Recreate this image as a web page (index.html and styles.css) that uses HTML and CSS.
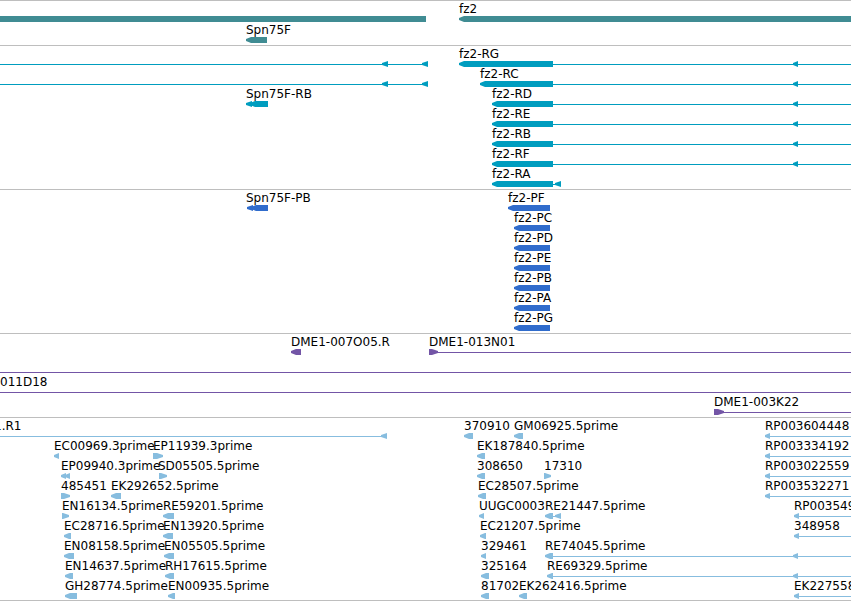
FILE: index.html
```
<!DOCTYPE html>
<html lang="en">
<head>
  <meta charset="utf-8">
  <title>Genome Browser</title>
  <link rel="stylesheet" href="styles.css">
</head>
<body>
  <main class="browser">
    <section class="track gene" id="gene" aria-label="Genes"></section>
    <section class="track transcript" id="transcript" aria-label="Transcripts"></section>
    <section class="track protein" id="protein" aria-label="Proteins"></section>
    <section class="track clone" id="clone" aria-label="Clones"></section>
    <section class="track est" id="est" aria-label="ESTs"></section>
  </main>
  <script src="tracks.js"></script>
</body>
</html>
```

FILE: styles.css
```
body {
  margin: 0;
  background-color: #fff;
  color: #000;
  font-family: "DejaVu Sans", sans-serif;
  font-size: 12px;
  line-height: 16px;
}

.browser {
  border-bottom: 1px solid #bebebe;
  overflow: hidden;
}

.track {
  display: flex;
  flex-direction: column;
  border-top: 1px solid #bebebe;
  padding-bottom: 3px;
}

/* track colors */
.gene {
  color: #408c93;
  gap: 1px;
}

.transcript {
  color: #009dbf;
}

.protein {
  color: #306ccc;
}

.clone {
  color: #7355a6;
}

.est {
  color: #87bddf;
  padding-bottom: 2px;
}

.row {
  position: relative;
  height: 20px;
}

.label {
  position: absolute;
  top: 0;
  color: #000;
  white-space: nowrap;
}

/* feature glyphs */
.bar,
.left,
.right,
.tip {
  position: absolute;
  top: 15px;
  height: 6px;
  background-color: currentColor;
}

.left {
  clip-path: polygon(0 34%, 5px 0, 100% 0, 100% 100%, 5px 100%, 0 66%);
}

.right {
  clip-path: polygon(0 0, calc(100% - 6px) 0, 100% 34%, 100% 66%, calc(100% - 6px) 100%, 0 100%);
}

.tip {
  clip-path: polygon(0 34%, 100% 0, 100% 100%, 0 66%);
}

.line {
  position: absolute;
  top: 18px;
  height: 1px;
  background-color: currentColor;
}

.to-edge {
  right: 0;
}
```

FILE: tracks.js
```
// Each row is a list of [type, start, end or text].
// A feature with no end runs on to the edge of the view.
var tracks = {
  gene: [
    [["bar", 0, 426], ["label", 459, "fz2"], ["left", 459]],
    [["label", 246, "Spn75F"], ["left", 246, 267]]
  ],
  transcript: [
    [["line", 0, 428], ["tip", 382, 388], ["tip", 422, 428],
     ["label", 459, "fz2-RG"], ["left", 459, 553], ["line", 553], ["tip", 793, 798]],
    [["line", 0, 428], ["tip", 382, 388], ["tip", 422, 428],
     ["label", 480, "fz2-RC"], ["left", 480, 553], ["line", 553], ["tip", 793, 798]],
    [["label", 246, "Spn75F-RB"], ["tip", 246, 252], ["left", 250, 268],
     ["label", 492, "fz2-RD"], ["left", 492, 553], ["line", 553], ["tip", 793, 798]],
    [["label", 492, "fz2-RE"], ["left", 492, 553], ["line", 553], ["tip", 793, 798]],
    [["label", 492, "fz2-RB"], ["left", 492, 553], ["line", 553], ["tip", 793, 798]],
    [["label", 492, "fz2-RF"], ["left", 492, 553], ["line", 553], ["tip", 793, 798]],
    [["label", 492, "fz2-RA"], ["left", 492, 553], ["line", 553, 561], ["tip", 555, 561]]
  ],
  protein: [
    [["label", 246, "Spn75F-PB"], ["tip", 247, 253], ["left", 251, 268],
     ["label", 508, "fz2-PF"], ["left", 508, 550]],
    [["label", 514, "fz2-PC"], ["left", 514, 550]],
    [["label", 514, "fz2-PD"], ["left", 514, 550]],
    [["label", 514, "fz2-PE"], ["left", 514, 550]],
    [["label", 514, "fz2-PB"], ["left", 514, 550]],
    [["label", 514, "fz2-PA"], ["left", 514, 550]],
    [["label", 514, "fz2-PG"], ["left", 514, 550]]
  ],
  clone: [
    [["label", 291, "DME1-007O05.R"], ["left", 291, 301],
     ["label", 429, "DME1-013N01"], ["right", 429, 438], ["line", 438]],
    [["line", 0]],
    [["label", 0, "011D18"], ["line", 0]],
    [["label", 714, "DME1-003K22"], ["right", 714, 724], ["line", 724]]
  ],
  est: [
    [["label", -6, "1.R1"], ["line", 0, 387], ["tip", 381, 387],
     ["label", 464, "370910"], ["left", 464, 473],
     ["label", 514, "GM06925.5prime"], ["left", 514, 523],
     ["label", 765, "RP003604448"], ["tip", 765, 770], ["line", 770]],
    [["label", 54, "EC00969.3prime"], ["tip", 54, 59],
     ["label", 153, "EP11939.3prime"], ["right", 153, 163],
     ["label", 477, "EK187840.5prime"], ["left", 477, 485],
     ["label", 765, "RP003334192"], ["tip", 765, 770], ["line", 770]],
    [["label", 61, "EP09940.3prime"], ["tip", 61, 66], ["left", 65, 70],
     ["label", 158, "SD05505.5prime"], ["right", 159, 167],
     ["label", 477, "308650"], ["left", 477, 485],
     ["label", 544, "17310"], ["right", 544, 551],
     ["label", 765, "RP003022559"], ["tip", 765, 770], ["line", 770]],
    [["label", 61, "485451"], ["right", 61, 70],
     ["label", 111, "EK292652.5prime"], ["left", 111, 121],
     ["label", 478, "EC28507.5prime"], ["left", 478, 486],
     ["label", 765, "RP003532271"], ["tip", 765, 770], ["line", 770]],
    [["label", 62, "EN16134.5prime"], ["right", 62, 69],
     ["label", 163, "RE59201.5prime"], ["left", 163, 174],
     ["label", 479, "UUGC0003"], ["left", 479, 484],
     ["label", 545, "RE21447.5prime"], ["left", 545, 553], ["line", 553, 561], ["tip", 555, 561],
     ["label", 794, "RP003549"], ["tip", 794, 799], ["line", 799]],
    [["label", 64, "EC28716.5prime"], ["left", 64, 71],
     ["label", 163, "EN13920.5prime"], ["left", 163, 173],
     ["label", 480, "EC21207.5prime"], ["left", 480, 486],
     ["label", 794, "348958"], ["tip", 794, 799], ["line", 799]],
    [["label", 64, "EN08158.5prime"], ["left", 64, 74],
     ["label", 164, "EN05505.5prime"], ["left", 164, 174],
     ["label", 481, "329461"], ["left", 481, 486],
     ["label", 545, "RE74045.5prime"], ["left", 545, 553], ["line", 553], ["tip", 793, 798]],
    [["label", 65, "EN14637.5prime"], ["left", 65, 73],
     ["label", 165, "RH17615.5prime"], ["left", 165, 174],
     ["label", 481, "325164"], ["left", 481, 489],
     ["label", 547, "RE69329.5prime"], ["left", 547, 553], ["line", 553], ["tip", 793, 798]],
    [["label", 65, "GH28774.5prime"], ["left", 65, 77],
     ["label", 168, "EN00935.5prime"], ["left", 168, 175],
     ["label", 481, "81702"], ["left", 481, 489],
     ["label", 519, "EK262416.5prime"], ["left", 519, 527],
     ["label", 794, "EK227558"], ["tip", 794, 799], ["line", 799]]
  ]
};

function drawFeature(feature) {
  var type = feature[0], start = feature[1], end = feature[2];
  var el = document.createElement("span");
  el.className = type;
  el.style.left = start + "px";
  if (type === "label") {
    el.textContent = end;
  } else if (end === undefined) {
    el.classList.add("to-edge");
  } else {
    el.style.width = (end - start) + "px";
  }
  return el;
}

Object.keys(tracks).forEach(function(name) {
  var track = document.getElementById(name);
  tracks[name].forEach(function(features) {
    var row = document.createElement("div");
    row.className = "row";
    features.forEach(function(feature) {
      row.appendChild(drawFeature(feature));
    });
    track.appendChild(row);
  });
});
```
